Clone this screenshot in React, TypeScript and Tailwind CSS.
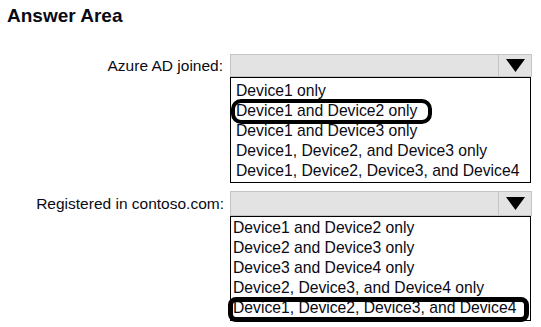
import React from 'react'

const first = [
  'Device1 only',
  'Device1 and Device2 only',
  'Device1 and Device3 only',
  'Device1, Device2, and Device3 only',
  'Device1, Device2, Device3, and Device4',
]

const second = [
  'Device1 and Device2 only',
  'Device2 and Device3 only',
  'Device3 and Device4 only',
  'Device2, Device3, and Device4 only',
  'Device1, Device2, Device3, and Device4',
]

function SelectBar({ tall }: { tall?: boolean }) {
  return (
    <div className={`flex w-[302px] border border-[#c4c4c4] bg-[#e3e3e3] ${tall ? 'h-[25px]' : 'h-[23px]'}`}>
      <div className="flex-1" />
      <div className="flex w-[33px] items-center justify-center border-l border-[#c4c4c4]">
        <svg width="19" height="13" viewBox="0 0 19 13">
          <path d="M0 0h19L9.5 13z" fill="#000" />
        </svg>
      </div>
    </div>
  )
}

export default function App() {
  return (
    <div className="h-[327px] w-[541px] overflow-hidden bg-white text-[#0a0a14]" style={{ fontFamily: '"Liberation Sans", Arial, sans-serif' }}>
      <h1 className="pl-[7px] pt-[6px] text-[19px] font-bold leading-[20px]">Answer Area</h1>

      <div className="mt-[28px] flex">
        <div className="flex h-[23px] w-[230px] items-center justify-end pr-[7px] text-[15.5px]">Azure AD joined:</div>
        <div>
          <SelectBar />
          <div className="relative w-[301px] border border-black pb-px pt-[3px] pl-[5px] text-[15.7px] leading-[20px]">
            {first.map((t) => (
              <div key={t}>{t}</div>
            ))}
            <div className="absolute left-0 top-[21px] h-[25px] w-[201px] rounded-[10px] border-[4px] border-black" />
          </div>
        </div>
      </div>

      <div className="mt-[8px] flex">
        <div className="flex h-[25px] w-[230px] items-center justify-end pr-[6px] text-[15.5px]">Registered in contoso.com:</div>
        <div>
          <SelectBar tall />
          <div className="relative w-[301px] border border-black pb-[2px] pt-px pl-[2px] text-[15.7px] leading-[20px]">
            {second.map((t) => (
              <div key={t}>{t}</div>
            ))}
            <div className="absolute left-[-3px] top-[80px] h-[25px] w-[301px] rounded-[8px] border-[5px] border-black" />
          </div>
        </div>
      </div>
    </div>
  )
}
